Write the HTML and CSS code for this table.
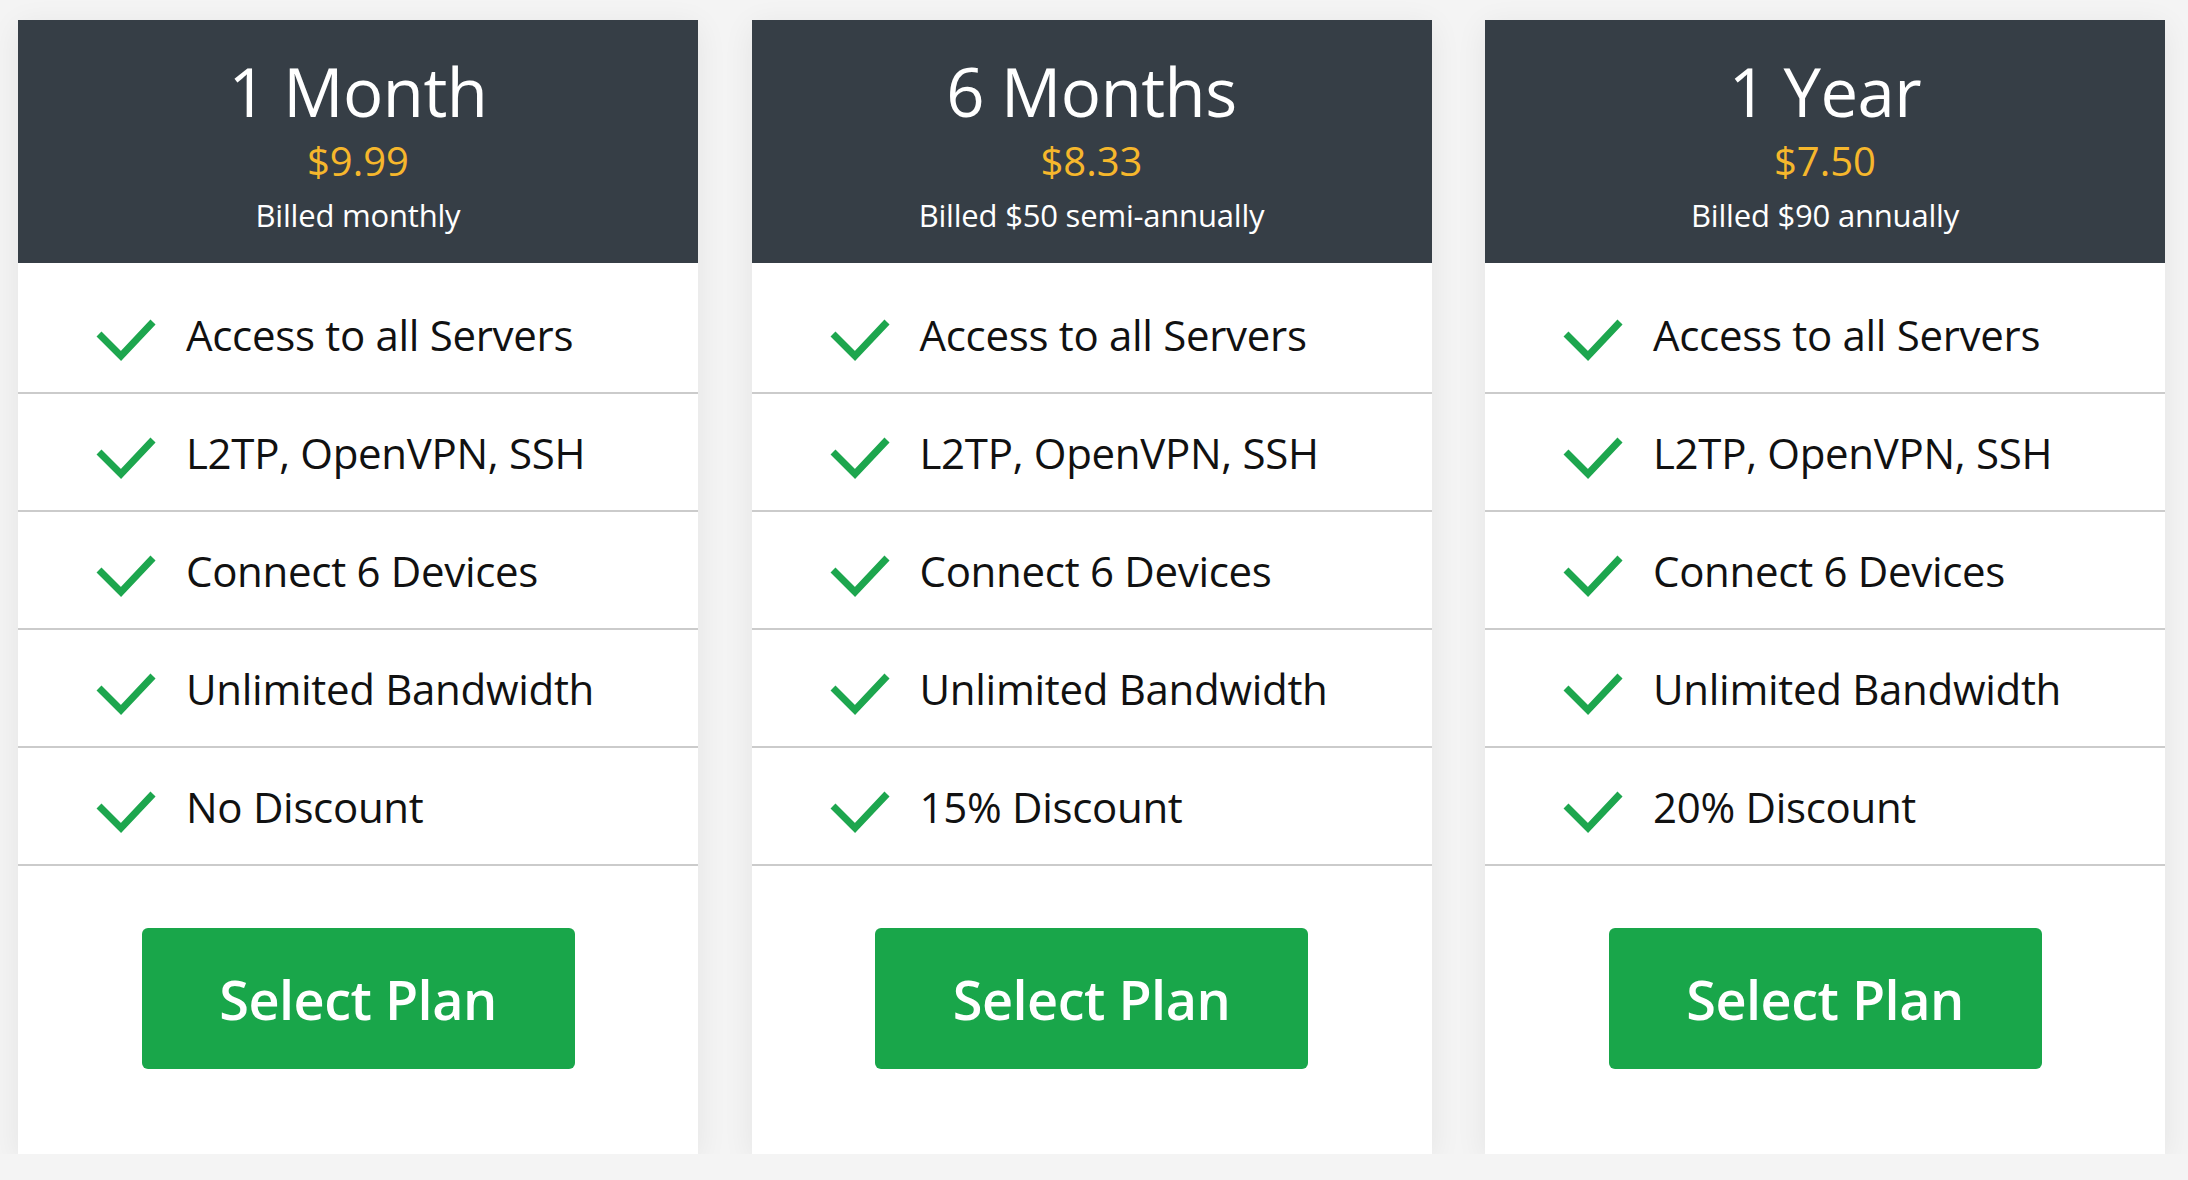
FILE: index.html
```html
<!DOCTYPE html>
<html lang="en">
<head>
<meta charset="utf-8">
<title>Plans</title>
<link rel="stylesheet" href="styles.css">
</head>
<body>
<main class="plans">
  <section class="card">
    <header class="card-head">
      <h2 class="plan-name">1 Month</h2>
      <div class="plan-price">$9.99</div>
      <div class="plan-billing">Billed monthly</div>
    </header>
    <ul class="features">
      <li class="feature"><svg class="check" viewBox="0 0 60 48"><path d="M3 22 L25 44 L57 10"/></svg><span>Access to all Servers</span></li>
      <li class="feature"><svg class="check" viewBox="0 0 60 48"><path d="M3 22 L25 44 L57 10"/></svg><span>L2TP, OpenVPN, SSH</span></li>
      <li class="feature"><svg class="check" viewBox="0 0 60 48"><path d="M3 22 L25 44 L57 10"/></svg><span>Connect 6 Devices</span></li>
      <li class="feature"><svg class="check" viewBox="0 0 60 48"><path d="M3 22 L25 44 L57 10"/></svg><span>Unlimited Bandwidth</span></li>
      <li class="feature"><svg class="check" viewBox="0 0 60 48"><path d="M3 22 L25 44 L57 10"/></svg><span>No Discount</span></li>
    </ul>
    <div class="card-foot"><a class="select-btn" href="#">Select Plan</a></div>
  </section>
  <section class="card">
    <header class="card-head">
      <h2 class="plan-name">6 Months</h2>
      <div class="plan-price">$8.33</div>
      <div class="plan-billing">Billed $50 semi-annually</div>
    </header>
    <ul class="features">
      <li class="feature"><svg class="check" viewBox="0 0 60 48"><path d="M3 22 L25 44 L57 10"/></svg><span>Access to all Servers</span></li>
      <li class="feature"><svg class="check" viewBox="0 0 60 48"><path d="M3 22 L25 44 L57 10"/></svg><span>L2TP, OpenVPN, SSH</span></li>
      <li class="feature"><svg class="check" viewBox="0 0 60 48"><path d="M3 22 L25 44 L57 10"/></svg><span>Connect 6 Devices</span></li>
      <li class="feature"><svg class="check" viewBox="0 0 60 48"><path d="M3 22 L25 44 L57 10"/></svg><span>Unlimited Bandwidth</span></li>
      <li class="feature"><svg class="check" viewBox="0 0 60 48"><path d="M3 22 L25 44 L57 10"/></svg><span>15% Discount</span></li>
    </ul>
    <div class="card-foot"><a class="select-btn" href="#">Select Plan</a></div>
  </section>
  <section class="card">
    <header class="card-head">
      <h2 class="plan-name">1 Year</h2>
      <div class="plan-price">$7.50</div>
      <div class="plan-billing">Billed $90 annually</div>
    </header>
    <ul class="features">
      <li class="feature"><svg class="check" viewBox="0 0 60 48"><path d="M3 22 L25 44 L57 10"/></svg><span>Access to all Servers</span></li>
      <li class="feature"><svg class="check" viewBox="0 0 60 48"><path d="M3 22 L25 44 L57 10"/></svg><span>L2TP, OpenVPN, SSH</span></li>
      <li class="feature"><svg class="check" viewBox="0 0 60 48"><path d="M3 22 L25 44 L57 10"/></svg><span>Connect 6 Devices</span></li>
      <li class="feature"><svg class="check" viewBox="0 0 60 48"><path d="M3 22 L25 44 L57 10"/></svg><span>Unlimited Bandwidth</span></li>
      <li class="feature"><svg class="check" viewBox="0 0 60 48"><path d="M3 22 L25 44 L57 10"/></svg><span>20% Discount</span></li>
    </ul>
    <div class="card-foot"><a class="select-btn" href="#">Select Plan</a></div>
  </section>
</main>
</body>
</html>
```
FILE: styles.css
```css
html, body {
  margin: 0;
  padding: 0;
}
body {
  background: #f4f4f4;
  font-family: "Open Sans", "Noto Sans", "Liberation Sans", sans-serif;
  color: #111;
}
.plans {
  display: grid;
  grid-template-columns: repeat(3, 680px);
  column-gap: 53.5px;
  padding: 20px 0 0 18px;
}
.card {
  background: #fff;
  height: 1134px;
  display: flex;
  flex-direction: column;
  box-shadow: 0 6px 30px rgba(0, 0, 0, 0.07);
}
.card-head {
  background: #363e46;
  height: 243px;
  box-sizing: border-box;
  padding-top: 31px;
  display: flex;
  flex-direction: column;
  align-items: center;
  color: #fff;
}
.plan-name {
  margin: 0;
  font-size: 67px;
  font-weight: 400;
  line-height: 80px;
  letter-spacing: -0.5px;
}
.plan-price {
  margin-top: 5px;
  font-size: 40px;
  line-height: 50px;
  color: #f6b72c;
}
.plan-billing {
  margin-top: 9px;
  font-size: 31px;
  line-height: 40px;
  letter-spacing: -0.2px;
}
.features {
  list-style: none;
  margin: 0;
  padding: 13px 0 0;
}
.feature {
  height: 116px;
  border-bottom: 2px solid #cbcbcb;
  display: flex;
  align-items: center;
  padding-left: 78px;
  font-size: 42px;
  letter-spacing: -0.3px;
}
.check {
  width: 60px;
  height: 48px;
  margin-right: 30px;
  margin-top: 4px;
  flex: none;
  overflow: visible;
}
.check path {
  fill: none;
  stroke: #1da64e;
  stroke-width: 7;
  stroke-linejoin: miter;
}
.card-foot {
  display: flex;
  justify-content: center;
  padding-top: 62px;
}
.select-btn {
  width: 433px;
  height: 141px;
  background: #19a64a;
  border-radius: 6px;
  color: #fff;
  text-decoration: none;
  font-size: 54px;
  font-weight: 600;
  letter-spacing: -0.5px;
  display: flex;
  align-items: center;
  justify-content: center;
}
```
